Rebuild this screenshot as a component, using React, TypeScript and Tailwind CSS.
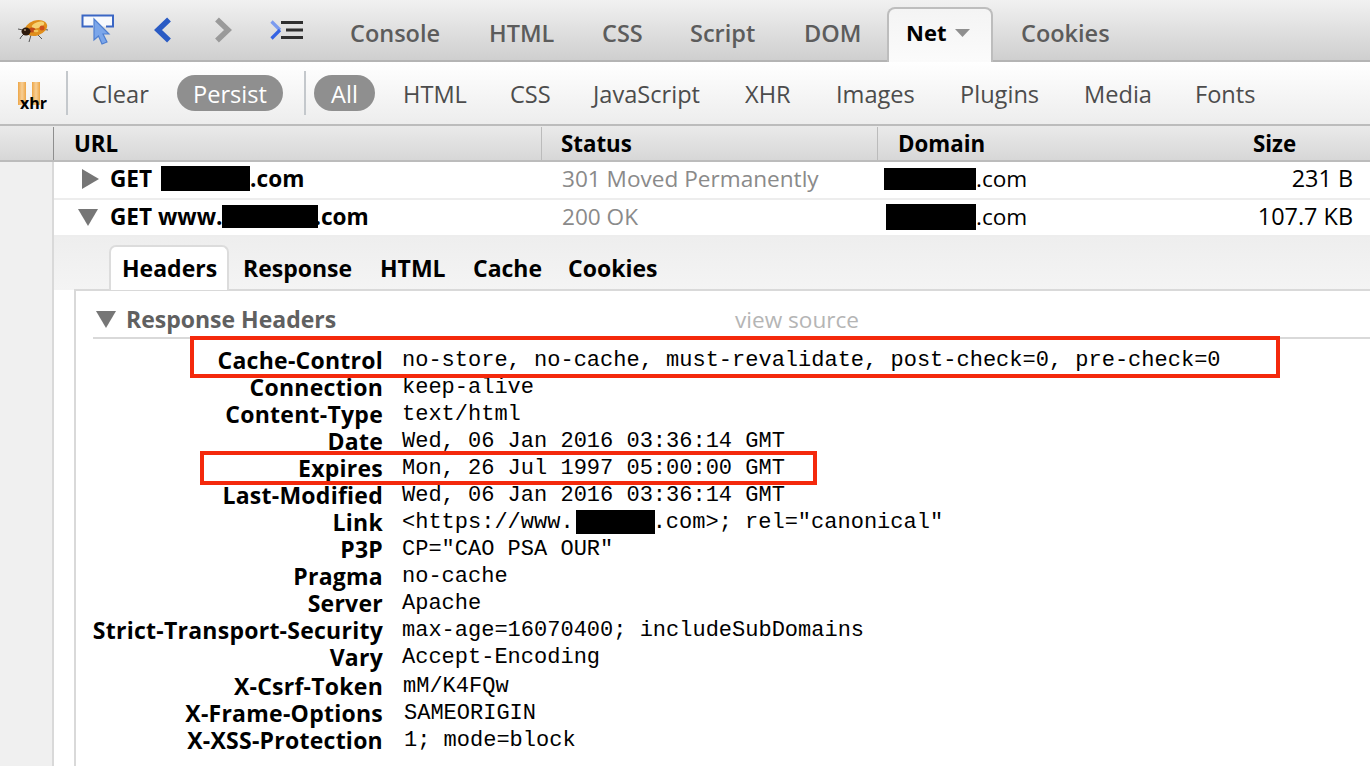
import type { ReactNode } from 'react'

const Blackout = ({ className }: { className: string }) => (
  <span className={`relative z-10 inline-block bg-black ${className}`} />
)

const Bug = () => (
  <svg width="32" height="26" viewBox="0 0 32 26" fill="none">
    <path d="M6 12 L1 11 M8 15 L4 19 L3 21 M14 17 L12 24 M20 16 L25 21 M24 11 L31 12 M22 7 L27 6" stroke="#555" strokeWidth="1" />
    <ellipse cx="19" cy="10" rx="11.5" ry="7.5" transform="rotate(-18 19 10)" fill="#e08f1c" />
    <ellipse cx="21" cy="7" rx="6.5" ry="3" transform="rotate(-18 21 7)" fill="#f6d272" />
    <ellipse cx="15" cy="12" rx="3.5" ry="2.5" fill="#c04a18" />
    <circle cx="25" cy="10" r="2.5" fill="#cf4f1a" />
    <ellipse cx="19" cy="13" rx="2.5" ry="1.2" fill="#f2c45a" />
    <ellipse cx="9" cy="13.5" rx="4.5" ry="4" fill="#2d1a0c" />
    <circle cx="8" cy="12" r="1" fill="#a89070" />
  </svg>
)

const InspectIcon = () => (
  <svg width="34" height="32" viewBox="0 0 34 32" fill="none">
    <path d="M12 12.5 H1.5 V1.5 H32 V12.5 H25" fill="#f7f9fd" stroke="#3a66c4" strokeWidth="2" />
    <path d="M13 5 L28 20 L22 20 L26 28 L21 30 L17.5 22 L13 26 Z" fill="#7ba6ea" stroke="#4f7fd0" strokeWidth="1.2" />
  </svg>
)

const Chevron = ({ dir, color }: { dir: 'l' | 'r'; color: string }) => (
  <svg width="18" height="26" viewBox="0 0 18 26" fill="none">
    <path d={dir === 'l' ? 'M15 2.5 L4 13 L15 23.5' : 'M3 2.5 L14 13 L3 23.5'} stroke={color} strokeWidth="5.5" />
  </svg>
)

const CommandIcon = () => (
  <svg width="34" height="20" viewBox="0 0 34 20" fill="none">
    <path d="M1.5 1.5 L10 10" stroke="#7b9bef" strokeWidth="3.2" />
    <path d="M10 10 L1.5 18.5" stroke="#3563e2" strokeWidth="3.2" />
    <path d="M11 2.5 H33 M16 10 H33 M11 17.5 H33" stroke="#2f2f2f" strokeWidth="2.8" />
  </svg>
)

const Triangle = ({ down }: { down?: boolean }) => (
  <svg width="20" height="20" viewBox="0 0 20 20">
    <path d={down ? 'M0 2 H20 L10 19 Z' : 'M2 0 L19 10 L2 20 Z'} fill="#767676" />
  </svg>
)

const topTabs: [string, string][] = [
  ['Console', 'w-[139px]'],
  ['HTML', 'w-[113px]'],
  ['CSS', 'w-[88px]'],
  ['Script', 'w-[114px]'],
  ['DOM', 'w-[83px]'],
]

const filters: [string, string][] = [
  ['HTML', 'w-[107px]'],
  ['CSS', 'w-[83px]'],
  ['JavaScript', 'w-[152px]'],
  ['XHR', 'w-[91px]'],
  ['Images', 'w-[124px]'],
  ['Plugins', 'w-[124px]'],
  ['Media', 'w-[111px]'],
  ['Fonts', 'w-[80px]'],
]

const headers: { name: string; value: ReactNode; cls?: string; rowCls?: string }[] = [
  { name: 'Cache-Control', value: 'no-store, no-cache, must-revalidate, post-check=0, pre-check=0' },
  { name: 'Connection', value: 'keep-alive' },
  { name: 'Content-Type', value: 'text/html' },
  { name: 'Date', value: 'Wed, 06 Jan 2016 03:36:14 GMT' },
  { name: 'Expires', value: 'Mon, 26 Jul 1997 05:00:00 GMT' },
  { name: 'Last-Modified', value: 'Wed, 06 Jan 2016 03:36:14 GMT' },
  {
    name: 'Link',
    value: (
      <>
        {'<https://www.'}
        <Blackout className="-mr-[2px] ml-[2px] h-[24px] w-[79px] align-[-6px]" />
        {'.com>; rel="canonical"'}
      </>
    ),
  },
  { name: 'P3P', value: 'CP="CAO PSA OUR"' },
  { name: 'Pragma', value: 'no-cache' },
  { name: 'Server', value: 'Apache' },
  { name: 'Strict-Transport-Security', value: 'max-age=16070400; includeSubDomains' },
  { name: 'Vary', value: 'Accept-Encoding' },
  { name: 'X-Csrf-Token', value: 'mM/K4FQw', cls: 'ml-[20px]', rowCls: 'mt-[2px]' },
  { name: 'X-Frame-Options', value: 'SAMEORIGIN', cls: 'ml-[21px]' },
  { name: 'X-XSS-Protection', value: '1; mode=block', cls: 'ml-[21px]' },
]

export default function App() {
  return (
    <div className="relative h-[766px] w-[1370px] overflow-hidden bg-white font-['Open_Sans',sans-serif] text-[22.6px] text-black">
      {/* firebug tab bar */}
      <div className="flex h-[62px] items-start border-b-2 border-[#b4b4b4] bg-gradient-to-b from-[#f1f1f1] to-[#cfcfcf]">
        <div className="flex h-[60px] w-[350px] items-center">
          <div className="ml-[17px] mt-[1px] w-[64px]"><Bug /></div>
          <div className="w-[73px]"><InspectIcon /></div>
          <div className="w-[60px]"><Chevron dir="l" color="#2a5bc4" /></div>
          <div className="w-[56px]"><Chevron dir="r" color="#9a9a9a" /></div>
          <CommandIcon />
        </div>
        {topTabs.map(([label, w]) => (
          <div key={label} className={`${w} pt-[15px] text-[23.5px] leading-[36px] font-semibold text-[#5c5c5c]`}>
            {label}
          </div>
        ))}
        <div className="relative mt-[7px] flex h-[55px] w-[106px] items-start rounded-t-[8px] border-x-2 border-t-2 border-[#bdbdbd] bg-gradient-to-b from-[#f4f4f4] to-[#fbfbfb] pl-[17px] pt-[5px] text-[22px] leading-[36px] font-bold">
          Net
          <svg width="15" height="8" viewBox="0 0 15 8" className="ml-[9px] mt-[15px]">
            <path d="M0 0 H15 L7.5 8 Z" fill="#8f8f8f" />
          </svg>
        </div>
        <div className="ml-[28px] pt-[15px] text-[23.5px] leading-[36px] font-semibold text-[#5c5c5c]">Cookies</div>
      </div>

      {/* filter bar */}
      <div className="flex h-[64px] items-center border-b-2 border-[#bcbcbc] bg-gradient-to-b from-white to-[#ededed] text-[23.6px] text-[#4c4c4c]">
        <div className="relative ml-[18px] h-[30px] w-[48px]">
          <div className="flex gap-[6px] pt-[4px]">
            <span className="h-[23px] w-[8px] bg-gradient-to-r from-[#eda645] via-[#f7cf95] to-[#eda645]" />
            <span className="h-[23px] w-[8px] bg-gradient-to-r from-[#eda645] via-[#f7cf95] to-[#eda645]" />
          </div>
          <span className="absolute left-[2px] top-[15px] text-[16px] leading-[20px] font-bold text-black">xhr</span>
        </div>
        <div className="h-[44px] w-[2px] bg-[#c4c8cc]" />
        <div className="ml-[24px] w-[85px] pt-[3px]">Clear</div>
        <div className="flex h-[36px] w-[106px] items-center justify-center rounded-full bg-[#8f8f8f] pt-[3px] text-white">Persist</div>
        <div className="ml-[21px] h-[44px] w-[2px] bg-[#c4c8cc]" />
        <div className="ml-[8px] flex h-[36px] w-[61px] items-center justify-center rounded-full bg-[#8f8f8f] pt-[3px] text-white">All</div>
        <div className="ml-[28px] flex pt-[3px]">
          {filters.map(([label, w]) => (
            <div key={label} className={w}>{label}</div>
          ))}
        </div>
      </div>

      {/* column headers */}
      <div className="flex h-[36px] items-center border-b-2 border-[#bcbcbc] bg-gradient-to-b from-[#eaeaea] to-[#d7d7d7] pt-[1px] text-[22.3px] font-bold">
        <div className="h-full w-[54px] border-r border-[#8e8e8e]" />
        <div className="w-[488px] border-r border-[#bbb] pl-[20px]">URL</div>
        <div className="w-[336px] border-r border-[#bbb] pl-[19px]">Status</div>
        <div className="w-[354px] pl-[20px]">Domain</div>
        <div className="pl-[21px]">Size</div>
      </div>

      <div className="flex">
        <div className="h-[604px] w-[54px] shrink-0 border-r-2 border-[#d9d9d9] bg-[#f0f0f0]" />
        <div className="min-w-0 flex-1">
          {/* request rows */}
          <div className="flex h-[38px] items-center border-b-2 border-[#ededed] pb-[3px]">
            <div className="ml-[26px] w-[30px]"><Triangle /></div>
            <div className="flex w-[452px] items-center text-[22.6px] font-bold">
              GET <Blackout className="ml-[9px] h-[25px] w-[89px]" />.com
            </div>
            <div className="w-[322px] text-[#8a8a8a]">301 Moved Permanently</div>
            <div className="flex w-[347px] items-center">
              <Blackout className="h-[22px] w-[92px]" />.com
            </div>
            <div className="w-[122px] text-right text-[23.4px] whitespace-nowrap">231 B</div>
          </div>
          <div className="flex h-[37px] items-center border-b-2 border-[#ededed] bg-white pb-[2px]">
            <div className="ml-[24px] w-[32px]"><Triangle down /></div>
            <div className="flex w-[452px] items-center text-[22.6px] font-bold">
              GET www.<Blackout className="-mr-[4px] h-[23px] w-[96px]" />.com
            </div>
            <div className="w-[324px] text-[#8a8a8a]">200 OK</div>
            <div className="flex w-[345px] items-center">
              <Blackout className="h-[26px] w-[90px]" />.com
            </div>
            <div className="w-[122px] text-right text-[23.4px] whitespace-nowrap">107.7 KB</div>
          </div>

          {/* response tabs */}
          <div className="flex h-[53px] items-end bg-gradient-to-b from-[#eeeeee] to-[#f4f4f4] pl-[55px]">
            <div className="h-[45px] w-[120px] rounded-t-[7px] border-x-2 border-t-2 border-[#dcdcdc] bg-white pl-[11px] pt-[3px] text-[23px] leading-[36px] font-bold">
              Headers
            </div>
            <div className="flex h-[44px] items-center pl-[14px] text-[23px] font-bold">
              <span className="w-[137px]">Response</span>
              <span className="w-[93px]">HTML</span>
              <span className="w-[95px]">Cache</span>
              <span>Cookies</span>
            </div>
          </div>

          {/* panel */}
          <div className="-mt-[1px] ml-[20px] h-[530px] border-l-2 border-t-2 border-[#d9d9d9] bg-white">
            <div className="relative ml-[17px] flex h-[48px] items-center border-b-2 border-[#d9d9d9] pt-[10px]">
              <div className="ml-[3px] w-[30px]"><Triangle down /></div>
              <span className="text-[23px] font-bold text-[#606060]">Response Headers</span>
              <span className="absolute left-[642px] top-[12px] text-[#b5b5b5]">view source</span>
            </div>
            <div className="pt-[8px]">
              {headers.map(h => (
                <div key={h.name} className={`flex h-[27px] items-center whitespace-nowrap ${h.rowCls ?? ''}`}>
                  <div className="w-[307px] text-right text-[23px] leading-[27px] font-bold tracking-[0.25px]">{h.name}</div>
                  <div className={`${h.cls ?? 'ml-[19px]'} font-['Liberation_Mono',monospace] text-[22px] leading-[27px]`}>{h.value}</div>
                </div>
              ))}
            </div>
          </div>
        </div>
      </div>

      {/* annotations */}
      <div className="absolute left-[190px] top-[336px] h-[42px] w-[1090px] border-4 border-[#f4290c]" />
      <div className="absolute left-[200px] top-[451px] h-[34px] w-[617px] border-4 border-[#f4290c]" />
    </div>
  )
}
